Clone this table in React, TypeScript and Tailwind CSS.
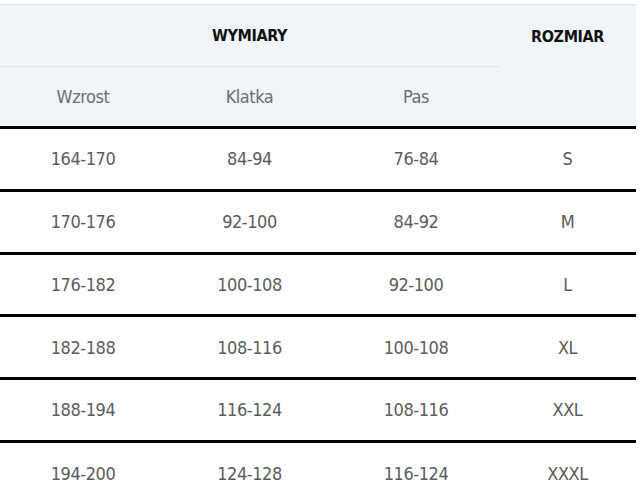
const rows = [
  ['164-170', '84-94', '76-84', 'S'],
  ['170-176', '92-100', '84-92', 'M'],
  ['176-182', '100-108', '92-100', 'L'],
  ['182-188', '108-116', '100-108', 'XL'],
  ['188-194', '116-124', '108-116', 'XXL'],
  ['194-200', '124-128', '116-124', 'XXXL'],
]

export default function App() {
  return (
    <div
      className="bg-white pt-[4px] h-[490px] overflow-hidden"
      style={{ fontFamily: '"DejaVu Sans Condensed", "DejaVu Sans", sans-serif' }}
    >
      <table className="w-[636px] border-collapse table-fixed">
        <colgroup>
          <col className="w-[166px]" />
          <col className="w-[167px]" />
          <col className="w-[166px]" />
          <col className="w-[137px]" />
        </colgroup>
        <thead className="bg-[#f0f5f9]">
          <tr className="h-[62px] border-t border-[#dde3e8]">
            <th
              colSpan={3}
              className="border-b border-[#dde3e8] text-[16px] font-bold text-[#111] tracking-tight"
            >
              WYMIARY
            </th>
            <th rowSpan={2} className="align-top pt-[20px] text-[16px] font-bold text-[#111] tracking-tight">
              ROZMIAR
            </th>
          </tr>
          <tr className="h-[61px]">
            <th className="text-[18px] font-normal text-[#6e6e6e] tracking-tight">Wzrost</th>
            <th className="text-[18px] font-normal text-[#6e6e6e] tracking-tight">Klatka</th>
            <th className="text-[18px] font-normal text-[#6e6e6e] tracking-tight">Pas</th>
          </tr>
        </thead>
        <tbody>
          {rows.map((r) => (
            <tr key={r[0]} className="h-[62.75px] border-t-[3px] border-black">
              {r.map((c, i) => (
                <td key={i} className="text-center text-[18px] text-[#5c5c5c] tracking-tight">
                  {c}
                </td>
              ))}
            </tr>
          ))}
        </tbody>
      </table>
    </div>
  )
}
